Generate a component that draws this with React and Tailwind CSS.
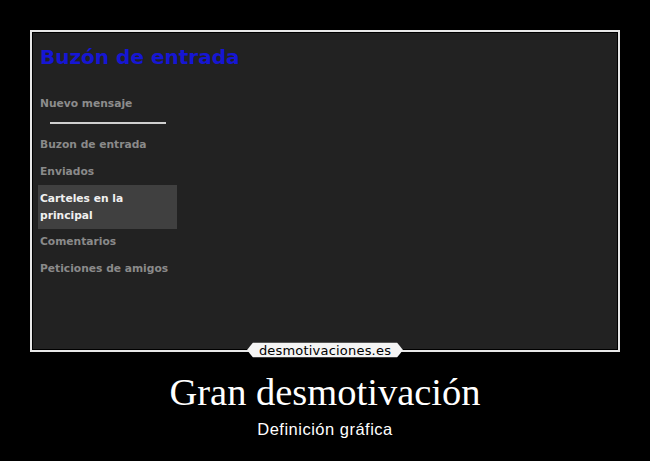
const menu = [
  { label: "Buzon de entrada" },
  { label: "Enviados" },
  { label: "Carteles en la principal", active: true },
  { label: "Comentarios" },
  { label: "Peticiones de amigos" },
];

// Small pill-shaped site badge sitting on the frame's bottom edge
const SiteBadge = () => (
  <div className="absolute left-1/2 top-[100%] -translate-x-1/2 -translate-y-1/2 w-[156px] h-[15px]">
    <svg viewBox="0 0 156 15" className="absolute inset-0 w-full h-full">
      <polygon points="6,0 150,0 156,7.5 150,15 6,15 0,7.5" fill="#f4f4f4" />
    </svg>
    <span className="relative flex h-full items-center justify-center text-[13px] leading-none tracking-[0.2px] text-black font-['DejaVu_Sans',sans-serif]">
      desmotivaciones.es
    </span>
  </div>
);

export default function App() {
  return (
    <div className="w-[650px] h-[461px] bg-black flex flex-col items-center pt-[30px]">
      <div className="relative w-[590px] h-[322px] border-2 border-[#e8e8e8] p-px bg-black">
        <div className="h-full bg-[#222222] pl-[7px] pt-[11px] font-['DejaVu_Sans',sans-serif]">
          <h1 className="text-[20px] font-bold leading-[26px] text-[#1616d4]">
            Buzón de entrada
          </h1>

          <div className="mt-[26px] flex flex-col">
            <span className="text-[10.7px] font-bold leading-[16px] text-[#8c8c8c]">
              Nuevo mensaje
            </span>
            <div className="ml-[10px] mt-[10px] h-[2px] w-[116px] bg-[#cfcfcf]" />
          </div>

          <ul className="mt-[13px] flex flex-col gap-[11px] w-[135px]">
            {menu.map((item) => (
              <li
                key={item.label}
                className={
                  item.active
                    ? "-mx-[2px] -my-[6px] bg-[#404040] px-[2px] py-[5px] text-[10.7px] font-bold leading-[17px] text-[#f0f0f0]"
                    : "text-[10.7px] font-bold leading-[16px] text-[#8a8a8a]"
                }
              >
                {item.label}
              </li>
            ))}
          </ul>
        </div>
        <SiteBadge />
      </div>

      <h2 className="mt-[18px] text-[38.5px] leading-[44px] text-white font-['Liberation_Serif',serif]">
        Gran desmotivación
      </h2>
      <p className="mt-[5px] text-[16.5px] leading-[20px] tracking-[0.5px] text-white font-['Liberation_Sans',sans-serif]">
        Definición gráfica
      </p>
    </div>
  );
}
